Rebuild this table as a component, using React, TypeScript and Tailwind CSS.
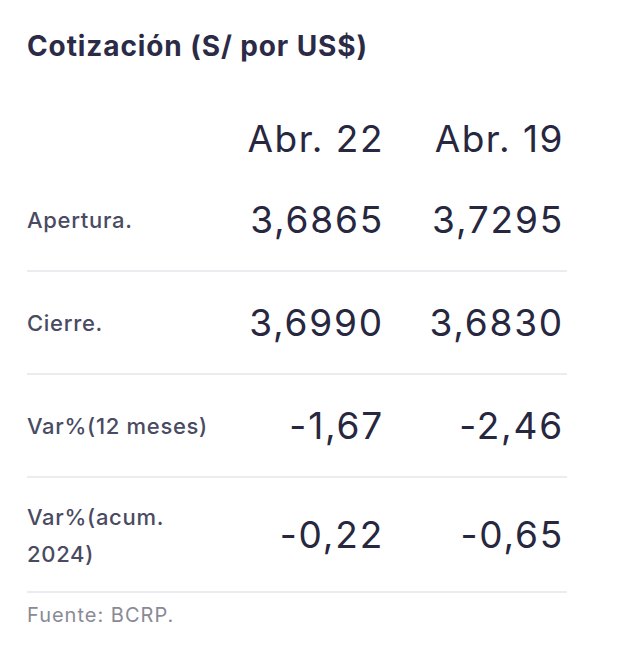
const rows = [
  { label: 'Apertura.', a: '3,6865', b: '3,7295', h: 'h-[103px]' },
  { label: 'Cierre.', a: '3,6990', b: '3,6830', h: 'h-[103px]' },
  { label: 'Var%(12 meses)', a: '-1,67', b: '-2,46', h: 'h-[103px]' },
  { label: 'Var%(acum. 2024)', a: '-0,22', b: '-0,65', h: 'h-[115px]' },
]

export default function App() {
  return (
    <div className="min-h-[656px] w-[620px] bg-white font-['Inter','Noto_Sans',sans-serif]">
      <div className="pl-[27px] pt-[28px] w-[567px]">
        <h1 className="text-[28px] leading-[36px] font-bold text-[#2b2b47] tracking-[0.9px]">
          Cotización (S/ por US$)
        </h1>

        <div className="mt-[45px] flex h-[60px] items-center text-[37px] text-[#27273f] tracking-[1.5px]">
          <div className="flex-1" />
          <div className="w-[164px] text-right">Abr. 22</div>
          <div className="w-[180px] text-right">Abr. 19</div>
          <div className="w-[3px]" />
        </div>

        {rows.map((row) => (
          <div
            key={row.label}
            className={`flex items-center border-b-2 border-[#ececf0] ${row.h}`}
          >
            <div className="flex-1 pr-[6px] pt-[2px] text-[22px] leading-[37px] text-[#4a4a62] font-medium tracking-[0.7px]">
              {row.label}
            </div>
            <div className="w-[164px] text-right text-[37px] text-[#27273f] tracking-[1.8px]">
              {row.a}
            </div>
            <div className="w-[180px] text-right text-[37px] text-[#27273f] tracking-[1.8px]">
              {row.b}
            </div>
            <div className="w-[3px]" />
          </div>
        ))}

        <p className="mt-[10px] text-[20px] leading-[24px] text-[#8a8a96] tracking-[1px]">
          Fuente: BCRP.
        </p>
      </div>
    </div>
  )
}
